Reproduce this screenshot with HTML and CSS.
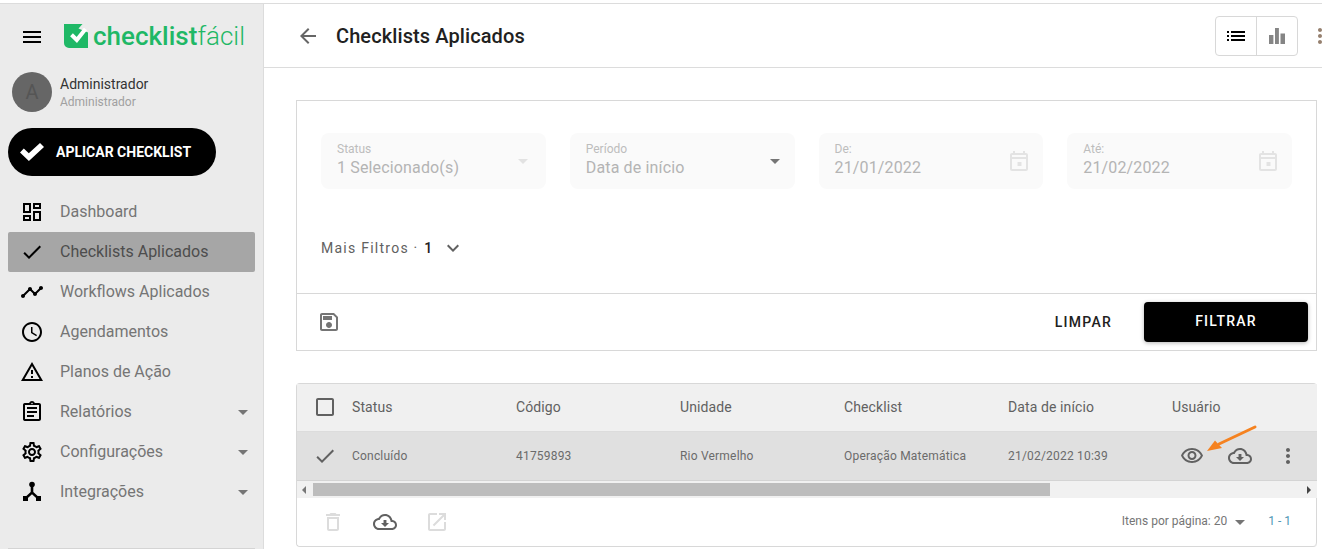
FILE: index.html
```html
<!DOCTYPE html>
<html lang="pt-BR">
<head>
<meta charset="utf-8">
<title>Checklists Aplicados</title>
<link rel="stylesheet" href="styles.css">
</head>
<body>
<svg class="sprite" aria-hidden="true">
<symbol id="i-menu" viewBox="0 0 24 24"><path d="M3 18h18v-2H3v2zm0-5h18v-2H3v2zm0-7v2h18V6H3z"/></symbol>
<symbol id="i-dash" viewBox="0 0 24 24"><path d="M19 5v2h-4V5h4M9 5v6H5V5h4m10 8v6h-4v-6h4M9 17v2H5v-2h4M21 3h-8v6h8V3zM11 3H3v10h8V3zm10 8h-8v10h8V11zm-10 4H3v6h8v-6z"/></symbol>
<symbol id="i-check" viewBox="0 0 24 24"><path d="M9 16.17L4.83 12l-1.42 1.41L9 19 21 7l-1.41-1.41z"/></symbol>
<symbol id="i-timeline" viewBox="0 0 24 24"><path d="M23 8c0 1.1-.9 2-2 2-.18 0-.35-.02-.51-.07l-3.56 3.55c.05.16.07.34.07.52 0 1.1-.9 2-2 2s-2-.9-2-2c0-.18.02-.36.07-.52l-2.55-2.55c-.16.05-.34.07-.52.07s-.36-.02-.52-.07l-4.55 4.56c.05.16.07.33.07.51 0 1.1-.9 2-2 2s-2-.9-2-2 .9-2 2-2c.18 0 .35.02.51.07l4.56-4.55C8.02 9.36 8 9.18 8 9c0-1.1.9-2 2-2s2 .9 2 2c0 .18-.02.36-.07.52l2.55 2.55c.16-.05.34-.07.52-.07s.36.02.52.07l3.55-3.56C19.02 8.35 19 8.18 19 8c0-1.1.9-2 2-2s2 .9 2 2z"/></symbol>
<symbol id="i-clock" viewBox="0 0 24 24"><path d="M11.99 2C6.47 2 2 6.48 2 12s4.47 10 9.99 10C17.52 22 22 17.52 22 12S17.52 2 11.99 2zM12 20c-4.42 0-8-3.58-8-8s3.58-8 8-8 8 3.58 8 8-3.58 8-8 8zm.5-13H11v6l5.25 3.15.75-1.23-4.5-2.67z"/></symbol>
<symbol id="i-warn" viewBox="0 0 24 24"><path d="M12 5.99L19.53 19H4.47L12 5.99M12 2L1 21h22L12 2zm1 14h-2v2h2v-2zm0-6h-2v4h2v-4z"/></symbol>
<symbol id="i-report" viewBox="0 0 24 24"><path d="M19 3h-4.18C14.4 1.84 13.3 1 12 1s-2.4.84-2.82 2H5c-.14 0-.27.01-.4.04-.39.08-.74.28-1.01.55-.18.18-.33.4-.43.64-.1.23-.16.49-.16.77v14c0 .27.06.54.16.78s.25.45.43.64c.27.27.62.47 1.01.55.13.02.26.03.4.03h14c1.1 0 2-.9 2-2V5c0-1.1-.9-2-2-2zm-7-.25c.41 0 .75.34.75.75s-.34.75-.75.75-.75-.34-.75-.75.34-.75.75-.75zM19 19H5V5h14v14zM7 15h7v2H7zm0-4h10v2H7zm0-4h10v2H7z"/></symbol>
<symbol id="i-gear" viewBox="0 0 24 24"><path d="M19.43 12.98c.04-.32.07-.64.07-.98 0-.34-.03-.66-.07-.98l2.11-1.65c.19-.15.24-.42.12-.64l-2-3.46c-.09-.16-.26-.25-.44-.25-.06 0-.12.01-.17.03l-2.49 1c-.52-.4-1.08-.73-1.69-.98l-.38-2.65C14.46 2.18 14.25 2 14 2h-4c-.25 0-.46.18-.49.42l-.38 2.65c-.61.25-1.17.59-1.69.98l-2.49-1c-.06-.02-.12-.03-.18-.03-.17 0-.34.09-.43.25l-2 3.46c-.13.22-.07.49.12.64l2.11 1.65c-.04.32-.07.65-.07.98 0 .33.03.66.07.98l-2.11 1.65c-.19.15-.24.42-.12.64l2 3.46c.09.16.26.25.44.25.06 0 .12-.01.17-.03l2.49-1c.52.4 1.08.73 1.69.98l.38 2.65c.03.24.24.42.49.42h4c.25 0 .46-.18.49-.42l.38-2.65c.61-.25 1.17-.59 1.69-.98l2.49 1c.06.02.12.03.18.03.17 0 .34-.09.43-.25l2-3.46c.12-.22.07-.49-.12-.64l-2.11-1.65zm-1.98-1.71c.04.31.05.52.05.73 0 .21-.02.43-.05.73l-.14 1.13.89.7 1.08.84-.7 1.21-1.27-.51-1.04-.42-.9.68c-.43.32-.84.56-1.25.73l-1.06.43-.16 1.13-.2 1.35h-1.4l-.19-1.35-.16-1.13-1.06-.43c-.43-.18-.83-.41-1.23-.71l-.91-.7-1.06.43-1.27.51-.7-1.21 1.08-.84.89-.7-.14-1.13c-.03-.31-.05-.54-.05-.74s.02-.43.05-.73l.14-1.13-.89-.7-1.08-.84.7-1.21 1.27.51 1.04.42.9-.68c.43-.32.84-.56 1.25-.73l1.06-.43.16-1.13.2-1.35h1.39l.19 1.35.16 1.13 1.06.43c.43.18.83.41 1.23.71l.91.7 1.06-.43 1.27-.51.7 1.21-1.07.85-.89.7.14 1.13zM12 8c-2.21 0-4 1.79-4 4s1.79 4 4 4 4-1.79 4-4-1.79-4-4-4zm0 6c-1.1 0-2-.9-2-2s.9-2 2-2 2 .9 2 2-.9 2-2 2z"/></symbol>
<symbol id="i-hub" viewBox="0 0 24 24"><circle cx="12" cy="4.500" r="2.800"/><path d="M10.700 6h2.600v6l5.700 5.200-1.800 1.900-5.200-4.800-5.200 4.800L5 17.200 10.700 12z"/><path d="M3 16h5v5H3zM16 16h5v5h-5z"/></symbol>
<symbol id="i-list" viewBox="0 0 24 24"><path d="M3 13h2v-2H3v2zm0 4h2v-2H3v2zm0-8h2V7H3v2zm4 4h14v-2H7v2zm0 4h14v-2H7v2zM7 7v2h14V7H7z"/></symbol>
<symbol id="i-bars" viewBox="0 0 24 24"><path d="M4 11h4.400v9H4zM10 4h3.900v16H10zM15.500 9.500h4.500V20h-4.500z"/></symbol>
<symbol id="i-back" viewBox="0 0 24 24"><path d="M20 11H7.830l5.590-5.590L12 4l-8 8 8 8 1.410-1.410L7.830 13H20v-2z"/></symbol>
<symbol id="i-more" viewBox="0 0 24 24"><path d="M12 8c1.100 0 2-.9 2-2s-.9-2-2-2-2 .9-2 2 .9 2 2 2zm0 2c-1.100 0-2 .9-2 2s.9 2 2 2 2-.9 2-2-.9-2-2-2zm0 6c-1.100 0-2 .9-2 2s.9 2 2 2 2-.9 2-2-.9-2-2-2z"/></symbol>
<symbol id="i-cal" viewBox="0 0 24 24"><path d="M19 4h-1V2h-2v2H8V2H6v2H5c-1.110 0-2 .9-2 2v14c0 1.100.89 2 2 2h14c1.100 0 2-.9 2-2V6c0-1.100-.9-2-2-2zm0 16H5V10h14v10zm0-12H5V6h14v2zm-8.500 5h4v4h-4z"/></symbol>
<symbol id="i-save" viewBox="0 0 24 24"><path d="M17 3H5c-1.110 0-2 .9-2 2v14c0 1.100.89 2 2 2h14c1.100 0 2-.9 2-2V7l-4-4zm2 16H5V5h11.170L19 7.830V19zm-7-7c-1.660 0-3 1.340-3 3s1.340 3 3 3 3-1.340 3-3-1.340-3-3-3zM6 6h9v4H6z"/></symbol>
<symbol id="i-eye" viewBox="0 0 24 24"><path d="M12 6c3.790 0 7.170 2.130 8.820 5.500C19.170 14.870 15.790 17 12 17s-7.170-2.130-8.820-5.500C4.830 8.130 8.210 6 12 6m0-2C7 4 2.730 7.110 1 11.500 2.730 15.890 7 19 12 19s9.270-3.110 11-7.500C21.270 7.110 17 4 12 4zm0 5c1.380 0 2.500 1.120 2.500 2.500S13.380 14 12 14s-2.500-1.120-2.500-2.500S10.620 9 12 9m0-2c-2.480 0-4.500 2.020-4.500 4.500S9.520 16 12 16s4.500-2.020 4.500-4.500S14.480 7 12 7z"/></symbol>
<symbol id="i-cloud" viewBox="0 0 24 24"><path d="M19.350 10.040C18.670 6.590 15.640 4 12 4 9.110 4 6.600 5.640 5.350 8.040 2.340 8.360 0 10.910 0 14c0 3.310 2.690 6 6 6h13c2.760 0 5-2.240 5-5 0-2.640-2.050-4.780-4.650-4.960zM19 18H6c-2.210 0-4-1.790-4-4 0-2.050 1.530-3.760 3.560-3.970l1.070-.11.5-.95C8.080 7.140 9.940 6 12 6c2.620 0 4.880 1.860 5.390 4.430l.3 1.500 1.530.11c1.560.1 2.780 1.410 2.780 2.960 0 1.650-1.350 3-3 3zm-5.550-8h-2.900v3H8l4 4 4-4h-2.550z"/></symbol>
<symbol id="i-trash" viewBox="0 0 24 24"><path d="M6 19c0 1.100.9 2 2 2h8c1.100 0 2-.9 2-2V7H6v12zM8 9h8v10H8V9zm7.500-5l-1-1h-5l-1 1H5v2h14V4z"/></symbol>
<symbol id="i-open" viewBox="0 0 24 24"><path d="M19 19H5V5h7V3H5c-1.110 0-2 .9-2 2v14c0 1.100.89 2 2 2h14c1.100 0 2-.9 2-2v-7h-2v7zM14 3v2h3.590l-9.830 9.830 1.410 1.410L19 6.410V10h2V3h-7z"/></symbol>
<symbol id="i-box" viewBox="0 0 24 24"><path d="M19 5v14H5V5h14m0-2H5c-1.100 0-2 .9-2 2v14c0 1.100.9 2 2 2h14c1.100 0 2-.9 2-2V5c0-1.100-.9-2-2-2z"/></symbol>
<symbol id="i-down" viewBox="0 0 24 24"><path d="M16.590 8.590L12 13.170 7.410 8.590 6 10l6 6 6-6z"/></symbol>
</svg>

<div class="app">
  <aside class="sidebar">
    <div class="brand">
      <svg class="icon"><use href="#i-menu"/></svg>
      <div class="logo">
        <svg class="logo-mark" viewBox="0 0 24 24"><path class="logo-bg" d="M0 0h18.500l-4 4.500L24 8.500V24H5a5 5 0 0 1-5-5z"/><path class="logo-tick" d="M7.500 10.800l5.300 5.200L21.500 5"/></svg>
        <span class="logo-text"><b>checklist</b>fácil</span>
      </div>
    </div>
    <div class="user">
      <div class="avatar">A</div>
      <div class="user-info">
        <div class="user-name">Administrador</div>
        <div class="user-role">Administrador</div>
      </div>
    </div>
    <button class="apply">
      <svg class="apply-check" viewBox="0 0 24 24"><path d="M0 12.500l3.800-3.900 5 4.700L20 3l4 4L8.900 21z"/></svg>
      <span>APLICAR CHECKLIST</span>
    </button>
    <nav class="nav">
      <a class="nav-item"><svg class="icon"><use href="#i-dash"/></svg><span>Dashboard</span></a>
      <a class="nav-item active"><svg class="icon"><use href="#i-check"/></svg><span>Checklists Aplicados</span></a>
      <a class="nav-item"><svg class="icon"><use href="#i-timeline"/></svg><span>Workflows Aplicados</span></a>
      <a class="nav-item"><svg class="icon"><use href="#i-clock"/></svg><span>Agendamentos</span></a>
      <a class="nav-item"><svg class="icon"><use href="#i-warn"/></svg><span>Planos de Ação</span></a>
      <a class="nav-item"><svg class="icon"><use href="#i-report"/></svg><span>Relatórios</span><i class="caret nav-caret"></i></a>
      <a class="nav-item"><svg class="icon"><use href="#i-gear"/></svg><span>Configurações</span><i class="caret nav-caret"></i></a>
      <a class="nav-item"><svg class="icon"><use href="#i-hub"/></svg><span>Integrações</span><i class="caret nav-caret"></i></a>
    </nav>
    <div class="side-end"></div>
  </aside>

  <main class="main">
    <header class="topbar">
      <svg class="icon back"><use href="#i-back"/></svg>
      <h1>Checklists Aplicados</h1>
      <div class="view-toggle">
        <span class="view-btn"><svg class="icon on"><use href="#i-list"/></svg></span>
        <span class="view-btn"><svg class="icon off"><use href="#i-bars"/></svg></span>
      </div>
      <svg class="icon top-more"><use href="#i-more"/></svg>
    </header>

    <div class="content">
      <section class="card">
        <div class="filters">
          <div class="fields">
            <div class="field"><div class="f-text"><label>Status</label><div class="f-value">1 Selecionado(s)</div></div><i class="caret faint"></i></div>
            <div class="field"><div class="f-text"><label>Período</label><div class="f-value">Data de início</div></div><i class="caret"></i></div>
            <div class="field"><div class="f-text"><label>De:</label><div class="f-value">21/01/2022</div></div><svg class="icon cal"><use href="#i-cal"/></svg></div>
            <div class="field"><div class="f-text"><label>Até:</label><div class="f-value">21/02/2022</div></div><svg class="icon cal"><use href="#i-cal"/></svg></div>
          </div>
          <div class="more-filters"><span>Mais Filtros · <b>1</b></span><svg class="icon chev"><use href="#i-down"/></svg></div>
        </div>
        <div class="card-foot">
          <svg class="icon save"><use href="#i-save"/></svg>
          <span class="clear">LIMPAR</span>
          <button class="filter-btn">FILTRAR</button>
        </div>
      </section>

      <section class="table">
        <div class="t-row t-head">
          <span class="t-check"><svg class="icon box"><use href="#i-box"/></svg></span>
          <span>Status</span><span>Código</span><span>Unidade</span><span>Checklist</span><span>Data de início</span><span>Usuário</span>
        </div>
        <div class="t-row t-body">
          <span class="t-check"><svg class="icon grey"><use href="#i-check"/></svg></span>
          <span>Concluído</span><span>41759893</span><span>Rio Vermelho</span><span>Operação Matemática</span><span>21/02/2022 10:39</span>
          <span class="t-actions">
            <svg class="icon grey"><use href="#i-eye"/></svg>
            <svg class="icon grey"><use href="#i-cloud"/></svg>
            <svg class="icon grey"><use href="#i-more"/></svg>
          </span>
        </div>
        <div class="scrollbar">
          <i class="sc-left"></i>
          <div class="sc-track"><div class="sc-thumb"></div></div>
          <i class="sc-right"></i>
        </div>
        <div class="t-foot">
          <svg class="icon dim"><use href="#i-trash"/></svg>
          <svg class="icon grey"><use href="#i-cloud"/></svg>
          <svg class="icon dim"><use href="#i-open"/></svg>
          <span class="pager">Itens por página: 20</span>
          <i class="caret pager-caret"></i>
          <span class="range">1 - 1</span>
        </div>
        <svg class="pointer" viewBox="0 0 54 30"><path d="M50 2L14 19" /><polygon points="2,26 10,15.500 17,23"/></svg>
      </section>
    </div>
  </main>
</div>
</body>
</html>
```
FILE: styles.css
```css
* { box-sizing: border-box; }
html, body { margin: 0; height: 549px; overflow: hidden; background: #fff; }
body { font-family: Roboto, "Liberation Sans", sans-serif; color: #757575; padding-top: 3px; }
.sprite { display: none; }
.icon { width: 24px; height: 24px; flex: none; fill: #000; display: block; }

.app { display: flex; height: 546px; border-top: 1px solid #dcdcdc; }

/* sidebar */
.sidebar { width: 264px; flex: none; background: #ebebeb; border-right: 1px solid #dcdcdc; padding: 0 8px; display: flex; flex-direction: column; height: 545px; }
.brand { display: flex; align-items: center; height: 64px; padding: 2px 0 0 12px; }
.logo { display: flex; align-items: center; margin-left: 20px; margin-top: -2px; }
.logo-mark { width: 24px; height: 24px; flex: none; }
.logo-bg { fill: #1fb866; }
.logo-tick { fill: none; stroke: #fff; stroke-width: 4px; }
.logo-text { font-family: Roboto, sans-serif; font-size: 26px; font-weight: 300; color: #1fb866; margin-left: 5px; line-height: 24px; }
.logo-text b { font-weight: 500; }

.user { display: flex; align-items: center; height: 40px; margin: 4px 0 0 4px; }
.avatar { width: 40px; height: 40px; border-radius: 50%; background: #666; color: #555; font-size: 20px; display: flex; align-items: center; justify-content: center; flex: none; }
.user-info { margin-left: 8px; padding-bottom: 1px; }
.user-name { font-size: 14px; line-height: 20px; color: #333; }
.user-role { font-size: 12px; line-height: 16px; color: #a0a0a0; }

.apply { display: flex; align-items: center; width: 208px; height: 48px; margin-top: 16px; padding: 0 0 1px 12px; border: 0; border-radius: 24px; background: #000; color: #fff; font-family: Roboto, sans-serif; font-size: 14px; font-weight: 700; }
.apply-check { width: 24px; height: 24px; fill: #fff; flex: none; margin-top: 1px; }
.apply span { margin-left: 12px; }

.nav { margin-top: 16px; display: flex; flex-direction: column; }
.nav-item { display: flex; align-items: center; height: 40px; padding: 0 12px; border-radius: 2px; font-size: 16px; color: #757575; }
.nav-item span { margin-left: 16px; flex: 1; padding-bottom: 2px; }
.nav-item.active { background: #a6a6a6; color: #4d4d4d; }
.caret { width: 0; height: 0; border: 5px solid transparent; border-top-color: #757575; border-bottom: 0; display: block; flex: none; }
.nav-caret { margin-right: -5px; }
.side-end { margin-top: auto; border-bottom: 1px solid #d4d4d4; }

/* main */
.main { flex: 1; min-width: 0; display: flex; flex-direction: column; }
.topbar { display: flex; align-items: center; height: 64px; flex: none; border-bottom: 1px solid #dcdcdc; padding-left: 32px; }
.back { fill: #666; }
.topbar h1 { margin: 0 0 0 16px; font-size: 20px; font-weight: 500; color: #212121; flex: 1; line-height: 24px; letter-spacing: .1px; }
.view-toggle { display: flex; width: 83px; height: 40px; border: 1px solid #d8d8d8; border-radius: 4px; }
.view-btn { flex: 1; display: flex; align-items: center; justify-content: center; }
.view-btn + .view-btn { border-left: 1px solid #d8d8d8; }
.icon.off { fill: #858585; }
.top-more { fill: #96806f; margin-left: 10px; margin-right: -10px; }

.content { padding: 32px 0 0 32px; width: 1053px; }
.card { width: 1021px; height: 251px; border: 1px solid #d8d8d8; display: flex; flex-direction: column; }
.filters { flex: 1; padding: 32px 24px 0 24px; border-bottom: 1px solid #d8d8d8; }
.fields { display: grid; grid-template-columns: repeat(4, 1fr); gap: 24px; }
.field { height: 56px; background: #fafafa; border-radius: 8px; display: flex; align-items: center; padding: 0 16px; }
.f-text { flex: 1; padding-bottom: 1px; }
.field label { display: block; font-size: 12px; line-height: 14px; color: #bdbdbd; }
.f-value { font-size: 16px; line-height: 22px; color: #b4b4b4; letter-spacing: .15px; margin-top: 1px; }
.caret.faint { border-top-color: #e2e2e2; margin-right: 2px; }
.field .caret:not(.faint) { margin-right: -1px; }
.cal { fill: #e3e3e3; margin-right: -4px; }
.more-filters { display: flex; align-items: center; margin-top: 47px; font-size: 14px; letter-spacing: 1.25px; color: #616161; height: 24px; }
.more-filters b { font-weight: 500; color: #212121; margin-left: 1px; }
.chev { fill: #616161; margin-left: 8px; }
.card-foot { height: 56px; flex: none; display: flex; align-items: center; padding: 0 8px 0 20px; }
.save { fill: #757575; }
.clear { margin-left: auto; font-size: 14px; font-weight: 500; letter-spacing: 1.25px; color: #212121; padding-bottom: 1px; }
.filter-btn { width: 164px; height: 40px; margin-left: 32px; padding: 0 0 2px; border: 0; border-radius: 4px; background: #000; color: #fff; font-family: Roboto, sans-serif; font-size: 14px; font-weight: 500; letter-spacing: 1.25px; box-shadow: 0 1px 4px rgba(0,0,0,.3); }

.table { position: relative; width: 1021px; margin-top: 32px; border: 1px solid #d8d8d8; border-right: 0; border-radius: 4px; height: 164px; }
.t-row { display: grid; grid-template-columns: 55px repeat(5, 164px) 1fr; align-items: center; }
.t-head { height: 48px; padding-bottom: 2px; background: #f0f0f0; font-size: 14px; color: #616161; letter-spacing: .1px; border-bottom: 1px solid #dcdcdc; }
.t-body { height: 49px; background: #e0e0e0; font-size: 12px; color: #6b6b6b; letter-spacing: .2px; border-bottom: 1px solid #d4d4d4; }
.t-check { padding-left: 16px; }
.t-head .t-check { margin-top: 1px; }
.box, .icon.grey { fill: #616161; }
.t-actions { display: flex; gap: 24px; padding-left: 8px; }
.scrollbar { height: 17px; background: #f1f1f1; display: flex; align-items: center; }
.sc-left, .sc-right { width: 0; height: 0; border: 4px solid transparent; border-left: 0; border-right-color: #777; flex: none; margin-left: 5px; }
.sc-right { border-right: 0; border-left: 4px solid #444; margin-left: auto; margin-right: 6px; }
.sc-track { width: 737px; margin-left: 7px; }
.sc-thumb { height: 13px; background: #bdbdbd; }
.t-foot { height: 48px; background: #fff; display: flex; align-items: center; padding-left: 24px; gap: 28px; border-radius: 0 0 4px 4px; border-right: 1px solid #d8d8d8; }
.icon.dim { fill: #dcdcdc; }
.pager { margin-left: auto; font-size: 12px; color: #757575; padding-bottom: 2px; }
.pager-caret { margin-left: -20px; }
.range { font-size: 12px; color: #4f97b5; margin-left: -5px; margin-right: 25px; padding-bottom: 2px; }
.pointer { position: absolute; left: 908px; top: 41px; width: 54px; height: 30px; }
.pointer path { stroke: #f58220; stroke-width: 3px; fill: none; stroke-linecap: round; }
.pointer polygon { fill: #f58220; }
```
